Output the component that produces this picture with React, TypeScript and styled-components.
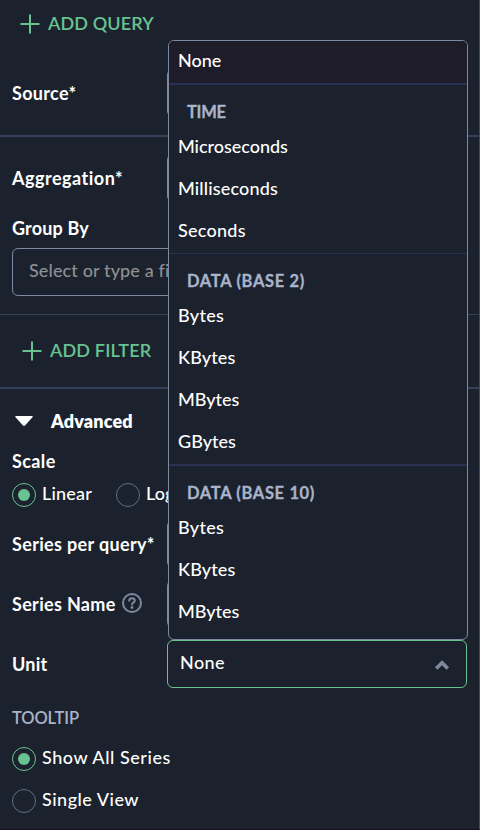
import React from 'react';
import styled, { createGlobalStyle } from 'styled-components';

const color = {
  bg: '#1c222d',
  text: '#ffffff',
  green: '#68c391',
  muted: '#a9b3ca',
  line: '#35415a',
  menuLine: '#2a3150',
  border: '#7e889e',
  ring: '#5f6a84',
  active: '#1f1c29',
  placeholder: '#8d8f92',
};

const GlobalStyle = createGlobalStyle`
  *, *::before, *::after { box-sizing: border-box; }
  body {
    margin: 0;
    background: ${color.bg};
    color: ${color.text};
    font: 500 18px/24px Lato, "Open Sans", sans-serif;
    font-variant-ligatures: none;
    overflow: hidden;
  }
`;

const Panel = styled.main`
  width: 480px;
  height: 830px;
  border-right: 1px solid #414a5e;
  border-bottom: 1px solid #15101c;
  overflow: hidden;
`;

const Section = styled.section<{ $height: number; $line?: number; $top?: number }>`
  height: ${p => p.$height}px;
  padding: ${p => p.$top ?? 0}px 12px 0;
  border-bottom: ${p => p.$line ?? 0}px solid ${color.line};
`;

const Text = styled.span<{ $track?: number }>`
  letter-spacing: ${p => p.$track ?? 0}px;
  white-space: nowrap;
`;

const AddButton = styled.button<{ $indent: number }>`
  display: flex;
  align-items: center;
  gap: 8px;
  height: 48px;
  padding: 0 0 0 ${p => p.$indent}px;
  border: 0;
  background: none;
  color: ${color.green};
  font: inherit;
  font-weight: 600;
  ${Text} { padding-bottom: 2px; }
`;

const Field = styled.div<{ $gap?: number }>`
  position: relative;
  display: grid;
  grid-template-columns: 155px 300px;
  align-items: center;
  height: 48px;
  margin-top: ${p => p.$gap ?? 0}px;
`;

const Label = styled.label<{ $gap?: number }>`
  display: flex;
  align-items: center;
  gap: 6px;
  height: 24px;
  margin-top: ${p => p.$gap ?? 0}px;
  font-weight: 700;
  svg { margin-bottom: 2px; }
`;

const Control = styled.div<{ $open?: boolean }>`
  display: flex;
  align-items: center;
  justify-content: space-between;
  height: 48px;
  padding: 0 16px 2px 12px;
  border: 1px solid ${p => (p.$open ? color.green : color.border)};
  border-radius: 6px;
  ${Text} { padding-bottom: 2px; }
  svg { margin-top: 4px; }
`;

const Combo = styled(Control)`
  width: 455px;
  margin-top: 8px;
  padding-left: 16px;
  color: ${color.placeholder};
`;

const Disclosure = styled.div`
  display: flex;
  align-items: center;
  gap: 18px;
  height: 24px;
  padding-left: 3px;
  font-weight: 800;
`;

const RadioGroup = styled.div<{ $column?: boolean; $top: number }>`
  display: flex;
  flex-direction: ${p => (p.$column ? 'column' : 'row')};
  gap: ${p => (p.$column ? 18 : 24)}px;
  margin-top: ${p => p.$top}px;
`;

const Radio = styled.label`
  display: flex;
  gap: 6px;
  height: 24px;
  line-height: 21px;
`;

const Ring = styled.span<{ $on?: boolean }>`
  display: grid;
  place-items: center;
  width: 24px;
  height: 24px;
  border: 1px solid ${p => (p.$on ? color.green : color.ring)};
  border-radius: 50%;
  &::after {
    content: '';
    width: 12px;
    height: 12px;
    border-radius: 50%;
    background: ${p => (p.$on ? color.green : 'transparent')};
  }
`;

const Caption = styled.h3`
  margin: 18px 0 0;
  color: ${color.muted};
  font-size: 16.5px;
  font-weight: 600;
  line-height: 24px;
`;

const Menu = styled.div`
  position: absolute;
  left: 156px;
  bottom: 48px;
  width: 300px;
  height: 600px;
  overflow: hidden;
  background: ${color.bg};
  border: 1px solid ${color.border};
  border-radius: 6px;
  z-index: 2;
`;

const Group = styled.div<{ $line: number; $gap?: number }>`
  border-top: ${p => p.$line}px solid ${color.menuLine};
  margin-top: ${p => p.$gap ?? 0}px;
`;

const GroupTitle = styled.div`
  height: 41px;
  padding: 15px 0 0 18px;
  color: ${color.muted};
  font-size: 16.5px;
  font-weight: 700;
  line-height: 24px;
  -webkit-text-stroke: 0.3px ${color.muted};
`;

const Option = styled.div<{ $active?: boolean }>`
  height: 42px;
  padding-left: 9px;
  line-height: ${p => (p.$active ? 38 : 40)}px;
  background: ${p => (p.$active ? color.active : 'transparent')};
`;

const Plus = () => (
  <svg width="20" height="20" viewBox="0 0 20 20" stroke="currentColor" strokeWidth="2" strokeLinecap="round">
    <path d="M10 1.3v17.4M1.3 10h17.4" />
  </svg>
);

const Caret = () => (
  <svg width="18" height="12" viewBox="0 0 18 12" fill="#fff">
    <path d="M1 1h16c.7 0 1 .7.5 1.200L10 10.400c-.6.6-1.400.6-2 0L.5 2.200C0 1.700.3 1 1 1z" />
  </svg>
);

const Help = () => (
  <svg width="20" height="20" viewBox="0 0 20 20" fill="none" stroke={color.border} strokeWidth="2" strokeLinecap="round">
    <circle cx="10" cy="10" r="9" />
    <path d="M7.200 7.800c0-1.700 1.200-2.600 2.800-2.600s2.800 1 2.800 2.400c0 1.900-2.800 2-2.800 3.800" />
    <circle cx="10" cy="14.500" r=".6" fill={color.border} strokeWidth="1.600" />
  </svg>
);

const Chevron = () => (
  <svg width="16" height="12" viewBox="0 0 16 12" fill="none" stroke={color.border} strokeWidth="3.600">
    <path d="M2.200 9.600 8 3.800l5.800 5.800" />
  </svg>
);

type Item = [label: string, track: number];
const groups: { title: Item; line: number; gap?: number; items: Item[] }[] = [
  { title: ['TIME', -0.3], line: 2, items: [['Microseconds', -0.03], ['Milliseconds', 0.16], ['Seconds', 0.25]] },
  {
    title: ['DATA (BASE 2)', 0.66],
    line: 1,
    gap: 1,
    items: [['Bytes', 0.3], ['KBytes', 0.13], ['MBytes', -0.02], ['GBytes', 0.01]],
  },
  { title: ['DATA (BASE 10)', 0.64], line: 2, gap: 1, items: [['Bytes', 0.3], ['KBytes', 0.13], ['MBytes', -0.02]] },
];

export default function App() {
  return (
    <>
      <GlobalStyle />
      <Panel>
        <Section $height={137} $line={2}>
          <AddButton $indent={8}><Plus /><Text $track={0.13}>ADD QUERY</Text></AddButton>
          <Field $gap={21}>
            <Label><Text $track={0.33}>Source*</Text></Label>
            <Control />
          </Field>
        </Section>

        <Section $height={178} $line={1} $top={17}>
          <Field>
            <Label><Text $track={0.5}>Aggregation*</Text></Label>
            <Control />
          </Field>
          <Label $gap={14}><Text $track={0.15}>Group By</Text></Label>
          <Combo><Text $track={0.12}>Select or type a field</Text></Combo>
        </Section>

        <Section $height={74} $line={2} $top={12}>
          <AddButton $indent={10}><Plus /><Text $track={0.15}>ADD FILTER</Text></AddButton>
        </Section>

        <Section $height={440} $top={20}>
          <Disclosure><Caret /><Text $track={0.15}>Advanced</Text></Disclosure>
          <Label $gap={16}><Text $track={0.4}>Scale</Text></Label>
          <RadioGroup $top={10}>
            <Radio><Ring $on /><Text $track={0.2}>Linear</Text></Radio>
            <Radio><Ring /><Text>Log</Text></Radio>
          </RadioGroup>
          <Field $gap={13}>
            <Label><Text $track={0.34}>Series per query*</Text></Label>
            <Control />
          </Field>
          <Field $gap={12}>
            <Label><Text $track={0.32}>Series Name</Text><Help /></Label>
            <Control />
          </Field>
          <Field $gap={12}>
            <Label><Text $track={0.24}>Unit</Text></Label>
            <Control $open><Text $track={0.4}>None</Text><Chevron /></Control>
            <Menu>
              <Option $active><Text $track={0}>None</Text></Option>
              {groups.map(g => (
                <Group key={g.title[0]} $line={g.line} $gap={g.gap}>
                  <GroupTitle><Text $track={g.title[1]}>{g.title[0]}</Text></GroupTitle>
                  {g.items.map(([label, track]) => (
                    <Option key={label}><Text $track={track}>{label}</Text></Option>
                  ))}
                </Group>
              ))}
            </Menu>
          </Field>
          <Caption><Text $track={-0.1}>TOOLTIP</Text></Caption>
          <RadioGroup $column $top={17}>
            <Radio><Ring $on /><Text $track={0.55}>Show All Series</Text></Radio>
            <Radio><Ring /><Text $track={0.5}>Single View</Text></Radio>
          </RadioGroup>
        </Section>
      </Panel>
    </>
  );
}
